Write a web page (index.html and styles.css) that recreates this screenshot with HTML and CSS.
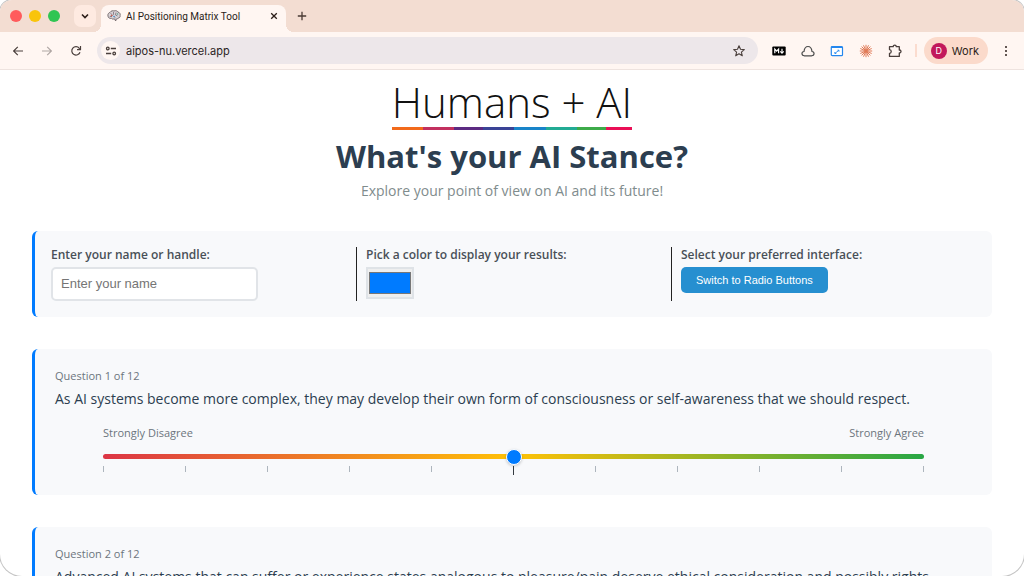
FILE: index.html
```
<!DOCTYPE html>
<html lang="en">
<head>
    <meta charset="UTF-8">
    <meta name="viewport" content="width=device-width, initial-scale=1.0">
    <title>AI Positioning Matrix Tool</title>
    <link rel="stylesheet" href="styles.css">
</head>
<body>
    <div class="window">
        <div class="tab-strip">
            <div class="lights">
                <span class="light red"></span>
                <span class="light yellow"></span>
                <span class="light green"></span>
            </div>
            <button type="button" class="tab-search" aria-label="Search tabs">
                <svg width="10" height="10" viewBox="0 0 10 10"><path d="M2 3.5l3 3 3-3" fill="none" stroke="#2b1d18" stroke-width="1.6"/></svg>
            </button>
            <div class="tab">
                <svg class="favicon" width="14" height="14" viewBox="0 0 14 14">
                    <path d="M1 7.2C.3 5 2 3.600 3.200 3.300 4 1.700 6 1.500 7 2c1.600-.8 3.300-.1 3.900 1 1.700.3 2.700 2 2.200 3.400.4 1.500-.7 2.700-2 2.700-.5.900-1.400 1-1.900.9l-.5 2-1.300-2.200C5.700 10.400 4.900 10 4.500 9.300 2.700 9.900 1.200 8.800 1 7.200z" fill="#d9d3d6" stroke="#6e6468" stroke-width=".9"/>
                    <path d="M3.500 4.500l1.500 1M6.500 3v2.500l-2 1.500M9 3.500L8.500 6l2 1M2.800 7.500H5M7 7.500l1.500 1.300" fill="none" stroke="#7a6f78" stroke-width=".8"/>
                    <circle cx="4.500" cy="6.500" r=".8" fill="#d65a50"/>
                    <circle cx="7" cy="7.500" r=".8" fill="#3f8fd0"/>
                    <circle cx="10.500" cy="5" r=".8" fill="#5a9e8b"/>
                </svg>
                <span class="tab-title">AI Positioning Matrix Tool</span>
                <button type="button" class="icon-button" aria-label="Close tab">
                    <svg width="8" height="8" viewBox="0 0 8 8"><path d="M1.200 1.200l5.600 5.600M6.800 1.200L1.200 6.800" stroke="#2b1d18" stroke-width="1.300"/></svg>
                </button>
            </div>
            <button type="button" class="icon-button new-tab" aria-label="New tab">
                <svg width="10" height="10" viewBox="0 0 10 10"><path d="M5 .8v8.400M.8 5h8.400" stroke="#4a3a34" stroke-width="1.300"/></svg>
            </button>
        </div>

        <div class="toolbar">
            <div class="nav">
                <button type="button" class="icon-button" aria-label="Back">
                    <svg width="12" height="12" viewBox="0 0 12 12"><path d="M11 6H1.800M5.800 1.800L1.600 6l4.200 4.200" fill="none" stroke="#4a3f3c" stroke-width="1.200"/></svg>
                </button>
                <button type="button" class="icon-button" aria-label="Forward">
                    <svg width="12" height="12" viewBox="0 0 12 12"><path d="M1 6h9.200M6.200 1.800L10.400 6l-4.200 4.200" fill="none" stroke="#b0a7a4" stroke-width="1.200"/></svg>
                </button>
                <button type="button" class="icon-button" aria-label="Reload">
                    <svg width="12" height="12" viewBox="0 0 12 12"><path d="M10 7.200A4.200 4.200 0 1 1 9.300 3.300L10.500 4.500" fill="none" stroke="#4a3f3c" stroke-width="1.200"/><path d="M10.500 1v3.600H7" fill="none" stroke="#4a3f3c" stroke-width="1.200"/></svg>
                </button>
            </div>
            <div class="omnibox">
                <button type="button" class="site-info" aria-label="Site information">
                    <svg width="12" height="12" viewBox="0 0 12 12" fill="none" stroke="#4a3f3c" stroke-width="1.300"><circle cx="2.800" cy="3.500" r="1.300"/><path d="M5.800 3.500H11M1 8.500h5.200"/><circle cx="9.200" cy="8.500" r="1.300"/></svg>
                </button>
                <input type="text" class="address" value="aipos-nu.vercel.app" aria-label="Address">
                <button type="button" class="icon-button" aria-label="Bookmark">
                    <svg width="14" height="14" viewBox="0 0 14 14"><path d="M7 1.800l1.500 3.500 3.800.3-2.900 2.500.9 3.700L7 9.800l-3.300 2 .9-3.700-2.900-2.500 3.800-.3z" fill="none" stroke="#4a3f3c" stroke-width="1.100" stroke-linejoin="round"/></svg>
                </button>
            </div>
            <div class="extensions">
                <button type="button" class="icon-button" aria-label="Markdown">
                    <svg width="14" height="14" viewBox="0 0 14 14"><rect x=".3" y="2.500" width="13.400" height="9" rx="1" fill="#000"/><path d="M2.800 9.300V5l1.900 2.200L6.600 5v4.300M10 4.800v3M8.300 7.300L10 9.200l1.700-1.900" fill="none" stroke="#fff" stroke-width="1.200"/></svg>
                </button>
                <button type="button" class="icon-button" aria-label="Drive">
                    <svg width="14" height="14" viewBox="0 0 14 14"><path d="M3.500 11.800C.2 11.800.2 8 3 7.500 3.400 4.300 5 2.500 7 2.500s3.600 1.800 4 5c2.800.5 2.800 4.300-.5 4.300z" fill="none" stroke="#4d4d4d" stroke-width="1.200"/></svg>
                </button>
                <button type="button" class="icon-button" aria-label="Resize window">
                    <svg width="14" height="14" viewBox="0 0 14 14"><rect x="1.300" y="2.500" width="11.200" height="9.200" rx="1" fill="#fff" stroke="#2487ee" stroke-width="1.200"/><path d="M1.300 3.300h11.200" stroke="#2487ee" stroke-width="1.400"/><path d="M5 9.300L8.800 6.400M4.800 8v1.500h1.500M7.500 6.200H9v1.500" fill="none" stroke="#2487ee" stroke-width=".9"/></svg>
                </button>
                <button type="button" class="icon-button" aria-label="Assistant">
                    <svg width="14" height="14" viewBox="0 0 14 14"><path d="M7 .8v12.400M.8 7h12.400M2.600 2.600l8.800 8.800M11.400 2.600l-8.800 8.800M4.500 1.300l5 11.400M9.500 1.300l-5 11.400M1.300 4.500l11.400 5M1.300 9.500l11.400-5" stroke="#e07b58" stroke-width="1"/></svg>
                </button>
                <button type="button" class="icon-button" aria-label="Extensions">
                    <svg width="14" height="14" viewBox="0 0 14 14"><path d="M1.500 2.700h3.700C5.200.5 8.300.5 8.300 2.700h3V6c2.300 0 2.300 3 0 3v3.400H1.500V9.300c2.300-.2 2.300-3.600 0-3.700z" fill="none" stroke="#4a3f3c" stroke-width="1.300" stroke-linejoin="round"/></svg>
                </button>
            </div>
            <span class="divider"></span>
            <button type="button" class="profile"><span class="avatar">D</span>Work</button>
            <button type="button" class="icon-button" aria-label="Menu">
                <svg width="4" height="12" viewBox="0 0 4 12" fill="#3d302c"><circle cx="2" cy="2" r="1.100"/><circle cx="2" cy="6" r="1.100"/><circle cx="2" cy="10" r="1.100"/></svg>
            </button>
        </div>

        <main class="page">
            <header class="header">
                <div class="logo">
                    <div class="logo-text">Humans + AI</div>
                    <div class="logo-bar"></div>
                </div>
                <h1>What's your AI Stance?</h1>
                <p class="subtitle">Explore your point of view on AI and its future!</p>
            </header>

            <form class="user-info">
                <div class="field">
                    <label for="username">Enter your name or handle:</label>
                    <input type="text" id="username" placeholder="Enter your name">
                </div>
                <div class="field">
                    <label for="userColor">Pick a color to display your results:</label>
                    <input type="color" id="userColor" value="#007bff">
                </div>
                <div class="field">
                    <label for="toggleInterface">Select your preferred interface:</label>
                    <button type="button" id="toggleInterface">Switch to Radio Buttons</button>
                </div>
            </form>

            <section class="question">
                <div class="question-number">Question 1 of 12</div>
                <label class="question-text" for="q1">As AI systems become more complex, they may develop their own form of consciousness or self-awareness that we should respect.</label>
                <div class="slider">
                    <div class="slider-labels"><span>Strongly Disagree</span><span>Strongly Agree</span></div>
                    <input type="range" id="q1" min="-5" max="5" value="0">
                    <div class="ticks">
                        <span></span><span></span><span></span><span></span><span></span><span class="middle"></span><span></span><span></span><span></span><span></span><span></span>
                    </div>
                </div>
            </section>

            <section class="question">
                <div class="question-number">Question 2 of 12</div>
                <label class="question-text" for="q2">Advanced AI systems that can suffer or experience states analogous to pleasure/pain deserve ethical consideration and possibly rights.</label>
                <div class="slider">
                    <div class="slider-labels"><span>Strongly Disagree</span><span>Strongly Agree</span></div>
                    <input type="range" id="q2" min="-5" max="5" value="0">
                    <div class="ticks">
                        <span></span><span></span><span></span><span></span><span></span><span class="middle"></span><span></span><span></span><span></span><span></span><span></span>
                    </div>
                </div>
            </section>
        </main>
    </div>
</body>
</html>
```
FILE: styles.css
```
* {
    box-sizing: border-box;
}

body {
    margin: 0;
    background: #fff;
    font-family: "Open Sans", "Noto Sans", sans-serif;
    color: #2c3e50;
}

button {
    font-family: inherit;
    border: none;
    padding: 0;
    background: none;
    cursor: pointer;
}

svg {
    display: block;
}

/* Browser window */
.window {
    height: 100vh;
    display: flex;
    flex-direction: column;
    overflow: hidden;
    background: #fff;
    border-radius: 12px 12px 22px 22px;
    box-shadow: 0 0 0 1px #c4c4c4;
}

.tab-strip {
    flex: none;
    display: flex;
    align-items: center;
    height: 32px;
    padding-left: 10px;
    background: #f3ddd2;
    font-family: Roboto, sans-serif;
}

.lights {
    display: flex;
    gap: 7px;
}

.light {
    width: 12px;
    height: 12px;
    border-radius: 50%;
}

.red {
    background: #ff5b5c;
}

.yellow {
    background: #f9c40b;
}

.green {
    background: #30c553;
}

.tab-search {
    display: flex;
    align-items: center;
    justify-content: center;
    width: 22px;
    height: 22px;
    margin-left: 14px;
    border-radius: 7px;
    background: #feeae1;
}

.tab {
    position: relative;
    align-self: flex-end;
    display: flex;
    align-items: center;
    width: 185px;
    height: 27px;
    margin-left: 5px;
    padding: 0 8px 5px 6px;
    border-radius: 8px 8px 0 0;
    background: #fff6f2;
}

/* flared bottom corners */
.tab::before,
.tab::after {
    content: "";
    position: absolute;
    bottom: 0;
    width: 8px;
    height: 8px;
}

.tab::before {
    right: 100%;
    background: radial-gradient(circle at 0 0, transparent 8px, #fff6f2 8px);
}

.tab::after {
    left: 100%;
    background: radial-gradient(circle at 100% 0, transparent 8px, #fff6f2 8px);
}

.tab-title {
    flex: 1;
    margin-left: 5px;
    font-size: 10px;
    white-space: nowrap;
    color: #2b1d18;
}

.icon-button {
    display: flex;
    align-items: center;
    justify-content: center;
}

.new-tab {
    margin-left: 11px;
}

.toolbar {
    flex: none;
    display: flex;
    align-items: center;
    height: 38px;
    padding: 0 16px 0 12px;
    background: #fff6f2;
    border-bottom: 1px solid #eee3df;
    font-family: Inter, sans-serif;
}

.nav {
    display: flex;
    gap: 17px;
    margin-right: 15px;
}

.omnibox {
    flex: 1;
    display: flex;
    align-items: center;
    height: 27px;
    padding: 0 12px 0 4px;
    border-radius: 14px;
    background: #ede7ea;
}

.site-info {
    display: flex;
    align-items: center;
    justify-content: center;
    width: 19px;
    height: 19px;
    border-radius: 50%;
    background: #fff6f2;
}

.address {
    flex: 1;
    margin-left: 6px;
    padding: 0;
    border: none;
    background: none;
    font-family: inherit;
    font-size: 11px;
    color: #2b2424;
}

.extensions {
    display: flex;
    gap: 15px;
    margin-left: 14px;
}

.divider {
    width: 2px;
    height: 13px;
    margin: 0 7px 0 13px;
    background: #fbdccf;
}

.profile {
    display: flex;
    align-items: center;
    gap: 5px;
    height: 27px;
    margin-right: 16px;
    padding: 0 9px 0 7px;
    border-radius: 14px;
    background: #fbdacb;
    font-size: 11px;
    color: #2b1d18;
}

.avatar {
    width: 16px;
    height: 16px;
    border-radius: 50%;
    background: #c2185b;
    color: #fff;
    font-size: 9px;
    line-height: 16px;
    text-align: center;
}

/* Page content */
.page {
    flex: 1;
    min-height: 0;
    overflow: hidden;
    padding: 10px 32px;
}

.header {
    display: flex;
    flex-direction: column;
    align-items: center;
    margin-bottom: 30px;
    text-align: center;
}

.logo-text {
    font-size: 42px;
    font-weight: 300;
    line-height: 44px;
    color: #111;
    white-space: nowrap;
}

.logo-bar {
    height: 3px;
    margin-top: 3px;
    background: linear-gradient(to right,
        #f26a1b 0 13%, #c2305f 13% 26%, #5c2a82 26% 38%, #3a4396 38% 51%,
        #1884c9 51% 64%, #22ab94 64% 77%, #3dab49 77% 89%, #ea0f56 89%);
}

h1 {
    margin: 6px 0 0;
    font-size: 31px;
    line-height: 40px;
}

.subtitle {
    margin: 4px 0 0;
    font-size: 14px;
    line-height: 21px;
    color: #7f8c8d;
}

.user-info {
    display: grid;
    grid-template-columns: repeat(3, 1fr);
    margin-bottom: 32px;
    padding: 16px 6px;
    background: #f8f9fb;
    border-left: 3px solid #007bff;
    border-radius: 6px;
}

.field {
    display: flex;
    flex-direction: column;
    align-items: flex-start;
    gap: 5px;
    padding: 0 10px;
}

.field + .field {
    padding-left: 9px;
    border-left: 1px solid #222;
}

.field label {
    font-size: 12px;
    font-weight: 600;
    line-height: 15px;
    color: #495057;
}

#username {
    width: 207px;
    height: 34px;
    padding: 0 8px 2px;
    border: 2px solid #e1e4e8;
    border-radius: 5px;
    background: #fff;
    font-family: "Liberation Sans", Arial, sans-serif;
    font-size: 13px;
}

#username::placeholder {
    color: #757575;
}

#userColor {
    width: 48px;
    height: 32px;
    padding: 0;
    border: 2px solid #dfe3e7;
    background: #efefef;
}

#userColor::-webkit-color-swatch-wrapper {
    padding: 3px 1px;
}

#toggleInterface {
    height: 26px;
    padding: 0 15px;
    border-radius: 5px;
    background: #268fd0;
    color: #fff;
    font-family: "Liberation Sans", Arial, sans-serif;
    font-size: 11px;
}

.question {
    margin-bottom: 32px;
    padding: 19px 20px 20px;
    background: #f8f9fb;
    border-left: 3px solid #007bff;
    border-radius: 6px;
}

.question-number {
    font-size: 11px;
    line-height: 16px;
    color: #6c757d;
}

.question-text {
    display: block;
    margin-top: 4px;
    font-size: 14px;
    line-height: 22px;
}

.slider {
    margin: 15px 48px 0;
}

.slider-labels {
    display: flex;
    justify-content: space-between;
    font-size: 11px;
    line-height: 16px;
    color: #6c757d;
}

input[type="range"] {
    -webkit-appearance: none;
    appearance: none;
    display: block;
    width: 100%;
    height: 5px;
    margin: 13px 0 7px;
    border-radius: 3px;
    background: linear-gradient(to right, #dc3545, #ffc107, #28a745);
}

input[type="range"]::-webkit-slider-thumb {
    -webkit-appearance: none;
    width: 16px;
    height: 16px;
    border: 1px solid #fff;
    border-radius: 50%;
    background: #007bff;
    box-shadow: 0 1px 3px rgba(0, 0, 0, 0.2);
}

.ticks {
    display: flex;
    justify-content: space-between;
    height: 9px;
}

.ticks span {
    width: 1px;
    height: 6px;
    background: #adb5bd;
}

.ticks .middle {
    height: 9px;
    background: #343a40;
}
```
